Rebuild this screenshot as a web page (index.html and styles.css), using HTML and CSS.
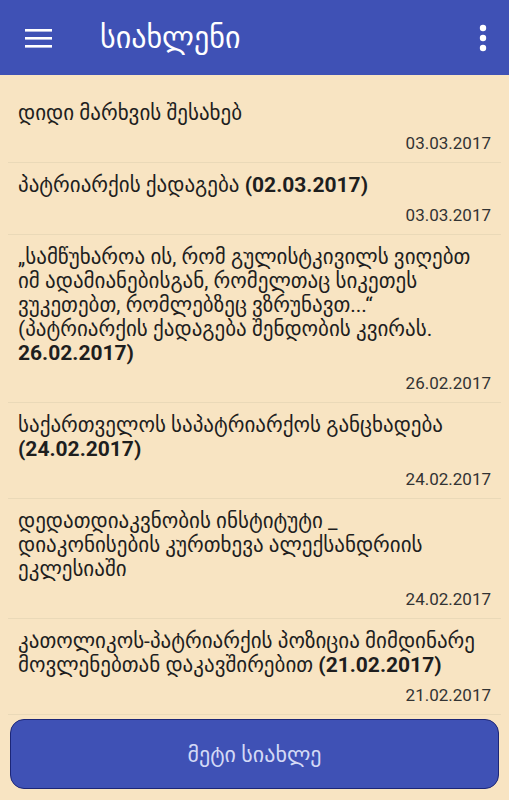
FILE: index.html
```html
<!DOCTYPE html>
<html lang="ka">
<head>
    <meta charset="UTF-8">
    <meta name="viewport" content="width=device-width, initial-scale=1.0">
    <title>სიახლენი</title>
    <link rel="stylesheet" href="styles.css">
</head>
<body>
    <header class="toolbar">
        <button class="icon-btn menu" aria-label="menu">
            <svg width="27" height="20" viewBox="0 0 27 20">
                <rect x="0" y="1" width="27" height="2.6" fill="#fff"/>
                <rect x="0" y="9" width="27" height="2.6" fill="#fff"/>
                <rect x="0" y="17" width="27" height="2.6" fill="#fff"/>
            </svg>
        </button>
        <h1 class="title">სიახლენი</h1>
        <button class="icon-btn more" aria-label="more">
            <svg width="8" height="28" viewBox="0 0 8 28">
                <circle cx="4" cy="4" r="3.2" fill="#fff"/>
                <circle cx="4" cy="14" r="3.2" fill="#fff"/>
                <circle cx="4" cy="24" r="3.2" fill="#fff"/>
            </svg>
        </button>
    </header>

    <ul class="news">
        <li class="news-item">
            <p class="news-title">დიდი მარხვის შესახებ</p>
            <p class="news-date">03.03.2017</p>
        </li>
        <li class="news-item">
            <p class="news-title">პატრიარქის ქადაგება <b class="num">(02.03.2017)</b></p>
            <p class="news-date">03.03.2017</p>
        </li>
        <li class="news-item">
            <p class="news-title">„სამწუხაროა ის, რომ გულისტკივილს ვიღებთ იმ ადამიანებისგან, რომელთაც სიკეთეს ვუკეთებთ, რომლებზეც ვზრუნავთ...“ (პატრიარქის ქადაგება შენდობის კვირას. <b class="num">26.02.2017)</b></p>
            <p class="news-date">26.02.2017</p>
        </li>
        <li class="news-item">
            <p class="news-title">საქართველოს საპატრიარქოს განცხადება <b class="num">(24.02.2017)</b></p>
            <p class="news-date">24.02.2017</p>
        </li>
        <li class="news-item">
            <p class="news-title">დედათდიაკვნობის ინსტიტუტი _<br>დიაკონისების კურთხევა ალექსანდრიის ეკლესიაში</p>
            <p class="news-date">24.02.2017</p>
        </li>
        <li class="news-item">
            <p class="news-title">კათოლიკოს-პატრიარქის პოზიცია მიმდინარე მოვლენებთან დაკავშირებით <b class="num">(21.02.2017)</b></p>
            <p class="news-date">21.02.2017</p>
        </li>
    </ul>

    <div class="more-wrap">
        <button class="more-btn">მეტი სიახლე</button>
    </div>
</body>
</html>
```

FILE: styles.css
```css
body {
    margin: 0;
    background: #f8e4c2;
    font-family: Roboto, "DejaVu Sans", sans-serif;
    color: #1e1e1e;
}
.toolbar {
    height: 75px;
    background: #3f51b5;
    display: flex;
    align-items: center;
    padding: 0 22px 0 25px;
    box-sizing: border-box;
}
.icon-btn {
    background: none;
    border: none;
    padding: 0;
    display: flex;
}
.title {
    flex: 1;
    margin: 0 0 0 48px;
    color: #fff;
    font-size: 30px;
    font-weight: normal;
}
.news {
    list-style: none;
    margin: 0;
    padding: 16px 8px 0;
}
.news-item {
    border-bottom: 1px solid #ead9b8;
    padding: 10px 10px 9px;
}
.news-item p {
    margin: 0;
}
.news-title {
    font-size: 21px;
    line-height: 24px;
}
.num {
    font-weight: bold;
}
.news-date {
    text-align: right;
    font-size: 17px;
    line-height: 20px;
    margin-top: 8px !important;
    color: #333;
}
.more-wrap {
    padding: 4px 10px 12px;
}
.more-btn {
    width: 100%;
    height: 70px;
    background: #3f51b5;
    border: 1px solid #1c2677;
    border-radius: 14px;
    color: #d3d9f6;
    font-family: Roboto, "DejaVu Sans", sans-serif;
    font-size: 22px;
}
```
